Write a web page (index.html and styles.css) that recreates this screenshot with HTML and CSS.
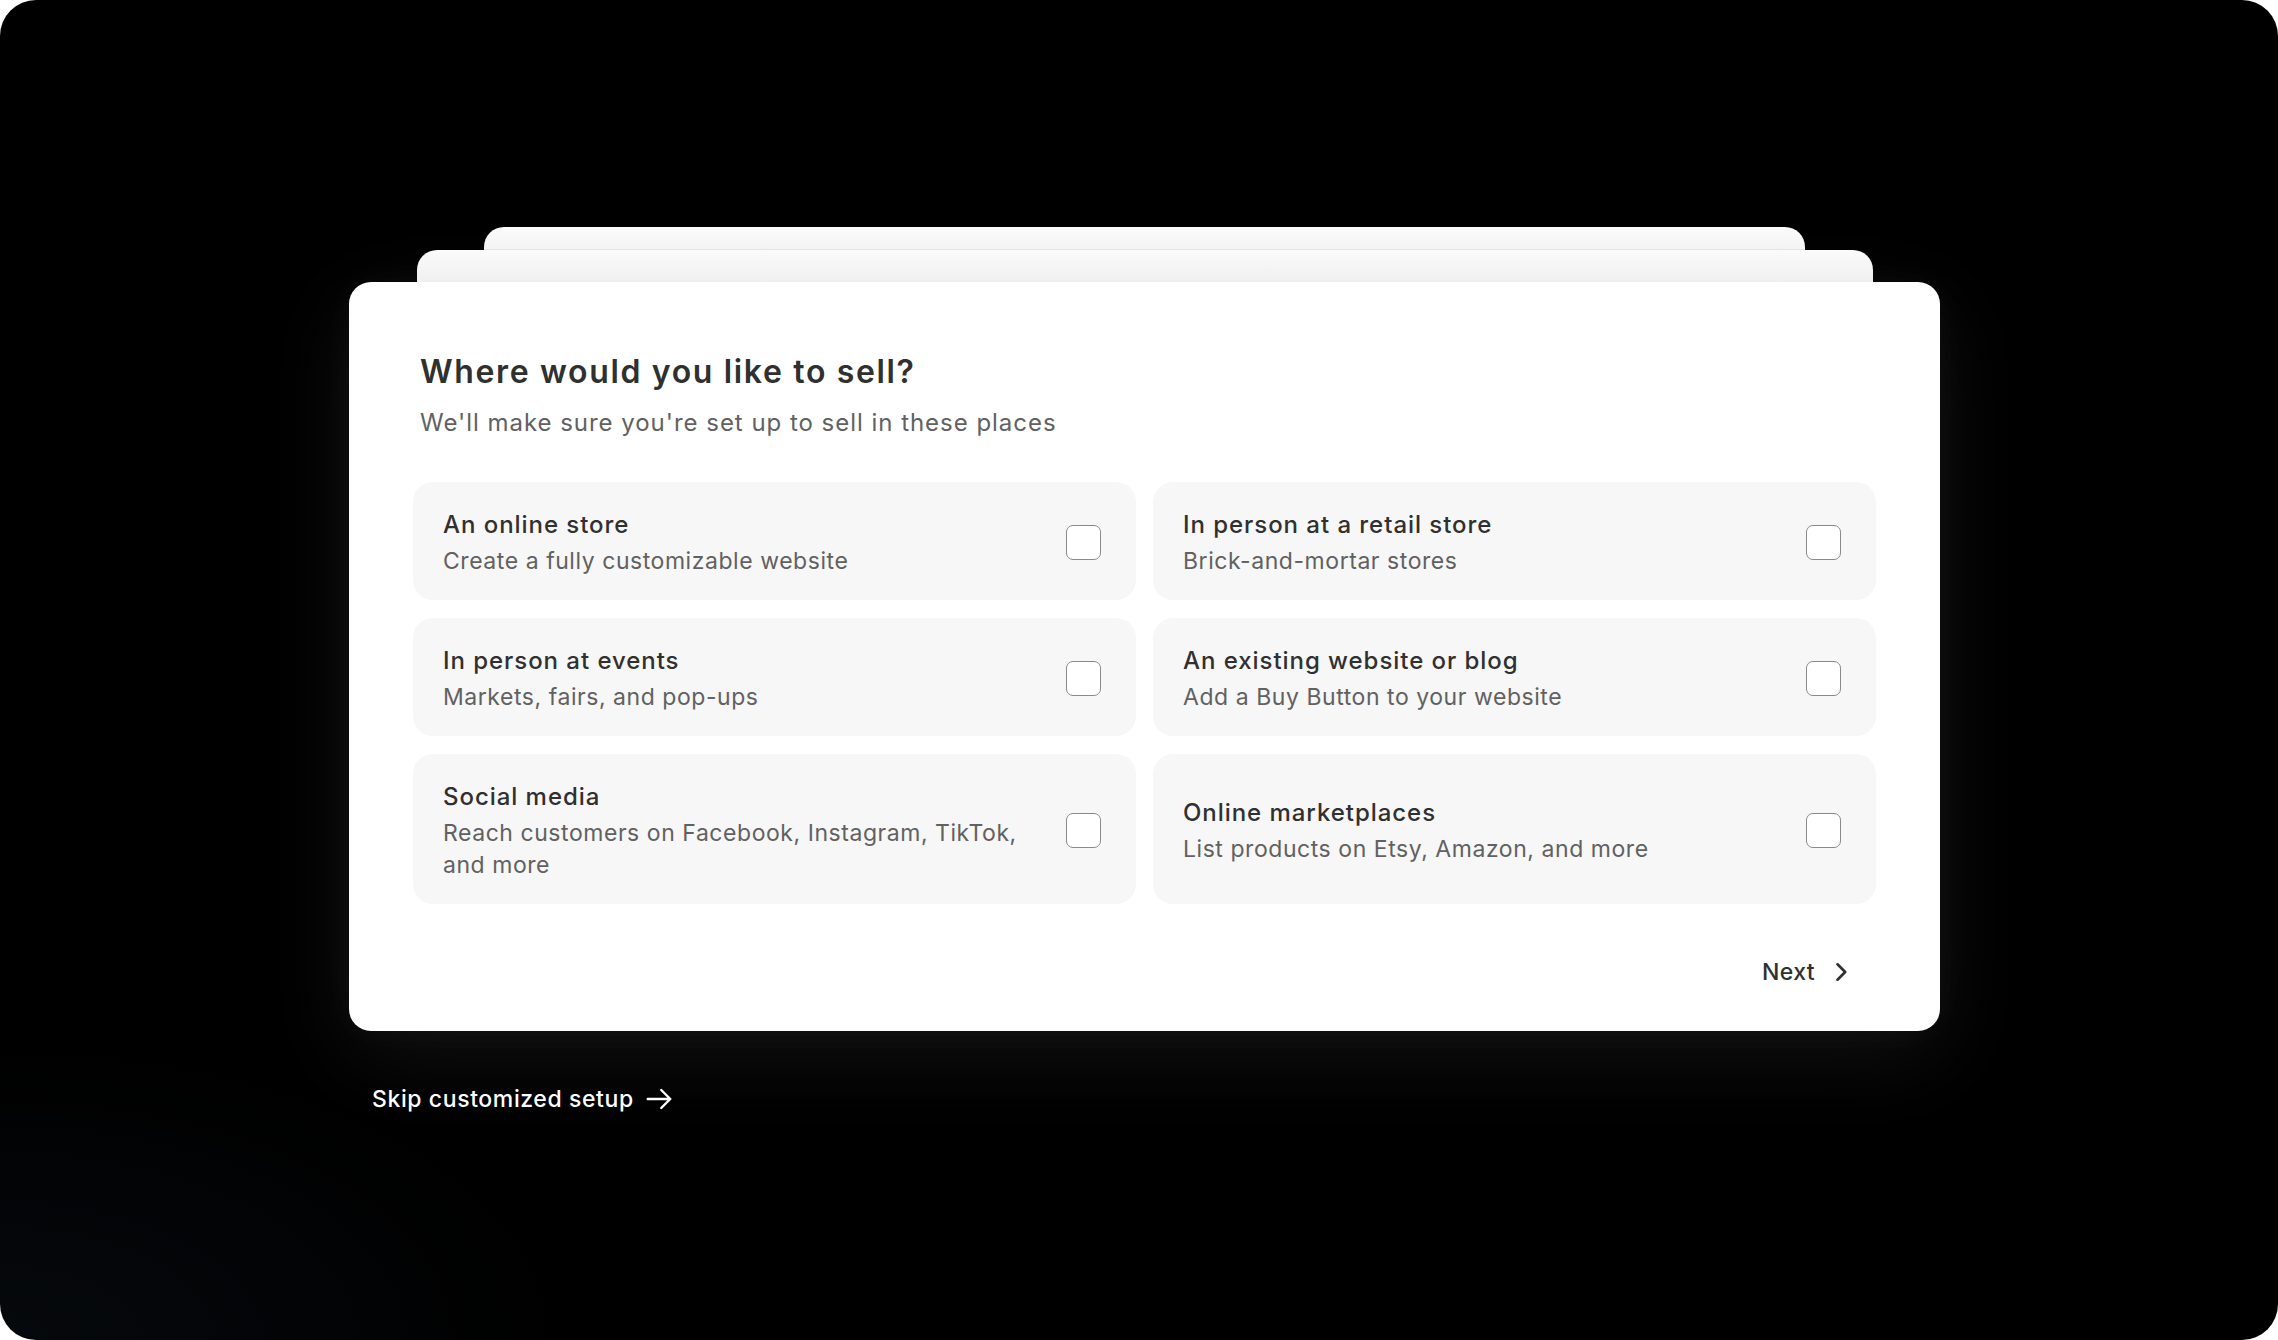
FILE: index.html
```html
<!DOCTYPE html>
<html lang="en">
<head>
<meta charset="utf-8">
<title>Where would you like to sell?</title>
<link rel="stylesheet" href="styles.css">
</head>
<body>
<div class="frame">
  <div class="stage">
    <div class="stack">
      <section class="card">
        <header class="card-head">
          <h1 class="title">Where would you like to sell?</h1>
          <p class="subtitle">We'll make sure you're set up to sell in these places</p>
        </header>
        <div class="options">
          <label class="option">
            <span class="option-text">
              <span class="option-title">An online store</span>
              <span class="option-desc">Create a fully customizable website</span>
            </span>
            <span class="checkbox"></span>
          </label>
          <label class="option">
            <span class="option-text">
              <span class="option-title">In person at a retail store</span>
              <span class="option-desc">Brick-and-mortar stores</span>
            </span>
            <span class="checkbox"></span>
          </label>
          <label class="option">
            <span class="option-text">
              <span class="option-title">In person at events</span>
              <span class="option-desc">Markets, fairs, and pop-ups</span>
            </span>
            <span class="checkbox"></span>
          </label>
          <label class="option">
            <span class="option-text">
              <span class="option-title">An existing website or blog</span>
              <span class="option-desc">Add a Buy Button to your website</span>
            </span>
            <span class="checkbox"></span>
          </label>
          <label class="option">
            <span class="option-text">
              <span class="option-title">Social media</span>
              <span class="option-desc">Reach customers on Facebook, Instagram, TikTok, and more</span>
            </span>
            <span class="checkbox"></span>
          </label>
          <label class="option">
            <span class="option-text">
              <span class="option-title">Online marketplaces</span>
              <span class="option-desc">List products on Etsy, Amazon, and more</span>
            </span>
            <span class="checkbox"></span>
          </label>
        </div>
        <footer class="card-foot">
          <button class="next" type="button">
            <span>Next</span>
            <svg class="chev" viewBox="0 0 20 20" width="28" height="28" aria-hidden="true"><path d="M7.5 4.5 13 10l-5.5 5.5" fill="none" stroke="#303030" stroke-width="1.9" stroke-linecap="round" stroke-linejoin="round"/></svg>
          </button>
        </footer>
      </section>
    </div>
    <a class="skip" href="#">
      <span>Skip customized setup</span>
      <svg class="arrow" viewBox="0 0 20 20" width="30" height="30" aria-hidden="true"><path d="M2.5 10h15M11.5 4l6 6-6 6" fill="none" stroke="#ffffff" stroke-width="1.6" stroke-linecap="round" stroke-linejoin="round"/></svg>
    </a>
  </div>
</div>
</body>
</html>
```

FILE: styles.css
```css
* { box-sizing: border-box; }

html, body {
  margin: 0;
  padding: 0;
  background: #ffffff;
}

body {
  font-family: Inter, "Noto Sans", "Liberation Sans", sans-serif;
  -webkit-font-smoothing: antialiased;
}

.frame {
  width: 2278px;
  height: 1340px;
  border-radius: 36px;
  overflow: hidden;
  background:
    radial-gradient(ellipse 800px 420px at 0% 100%, rgba(14, 22, 32, 0.4), rgba(0, 0, 0, 0) 70%),
    #000000;
  padding: 227px 0 0 349px;
}

.stage {
  width: 1591px;
  display: flex;
  flex-direction: column;
}

.stack {
  position: relative;
  padding-top: 55px;
}

.stack::before,
.stack::after {
  content: "";
  position: absolute;
  height: 120px;
  border-radius: 20px;
  background: linear-gradient(180deg, #fbfbfb 0%, #ececee 35%, #e8e8ea 100%);
}

.stack::before {
  top: 0;
  left: 135px;
  right: 135px;
}

.stack::after {
  top: 23px;
  left: 68px;
  right: 67px;
  box-shadow: 0 -1px 0 rgba(0, 0, 0, 0.06);
}

.card {
  position: relative;
  z-index: 1;
  background: #ffffff;
  border-radius: 22px;
  padding: 70px 64px 31px;
  box-shadow: 0 24px 90px rgba(255, 255, 255, 0.07), 0 0 40px rgba(255, 255, 255, 0.04);
}

.card-head {
  padding: 0 7px;
}

.title {
  margin: 0;
  font-size: 32px;
  line-height: 40px;
  font-weight: 600;
  color: #303030;
  letter-spacing: 1.65px;
}

.subtitle {
  margin: 15px 0 0;
  font-size: 24px;
  line-height: 32px;
  font-weight: 400;
  color: #616161;
  letter-spacing: 0.97px;
}

.options {
  margin-top: 43px;
  display: grid;
  grid-template-columns: 1fr 1fr;
  gap: 18px 17px;
}

.option {
  display: flex;
  align-items: center;
  gap: 24px;
  background: #f7f7f7;
  border-radius: 20px;
  padding: 25px 35px 23px 30px;
  cursor: pointer;
}

.option-text {
  flex: 1;
  display: flex;
  flex-direction: column;
}

.option-title {
  font-size: 24px;
  line-height: 36px;
  font-weight: 500;
  color: #303030;
  margin-bottom: 2px;
  letter-spacing: 0.95px;
}

.option-desc {
  font-size: 23px;
  line-height: 32px;
  font-weight: 400;
  color: #616161;
  letter-spacing: 0.55px;
}

.checkbox {
  flex: none;
  width: 35px;
  height: 35px;
  border: 1.6px solid #8a8a8a;
  border-radius: 7px;
  background: #ffffff;
}

.card-foot {
  margin-top: 40px;
  display: flex;
  justify-content: flex-end;
  padding-right: 15px;
}

.next {
  display: flex;
  align-items: center;
  gap: 12px;
  height: 56px;
  padding: 0 6px 0 16px;
  border: 0;
  background: transparent;
  font-family: inherit;
  font-size: 23px;
  font-weight: 500;
  color: #303030;
  letter-spacing: 0.4px;
  cursor: pointer;
}

.chev { display: block; }

.skip {
  margin: 52px 0 0 23px;
  align-self: flex-start;
  display: flex;
  align-items: center;
  gap: 10px;
  height: 32px;
  color: #ffffff;
  text-decoration: none;
  font-size: 23px;
  font-weight: 500;
  letter-spacing: 0.6px;
}

.arrow { display: block; }
```
